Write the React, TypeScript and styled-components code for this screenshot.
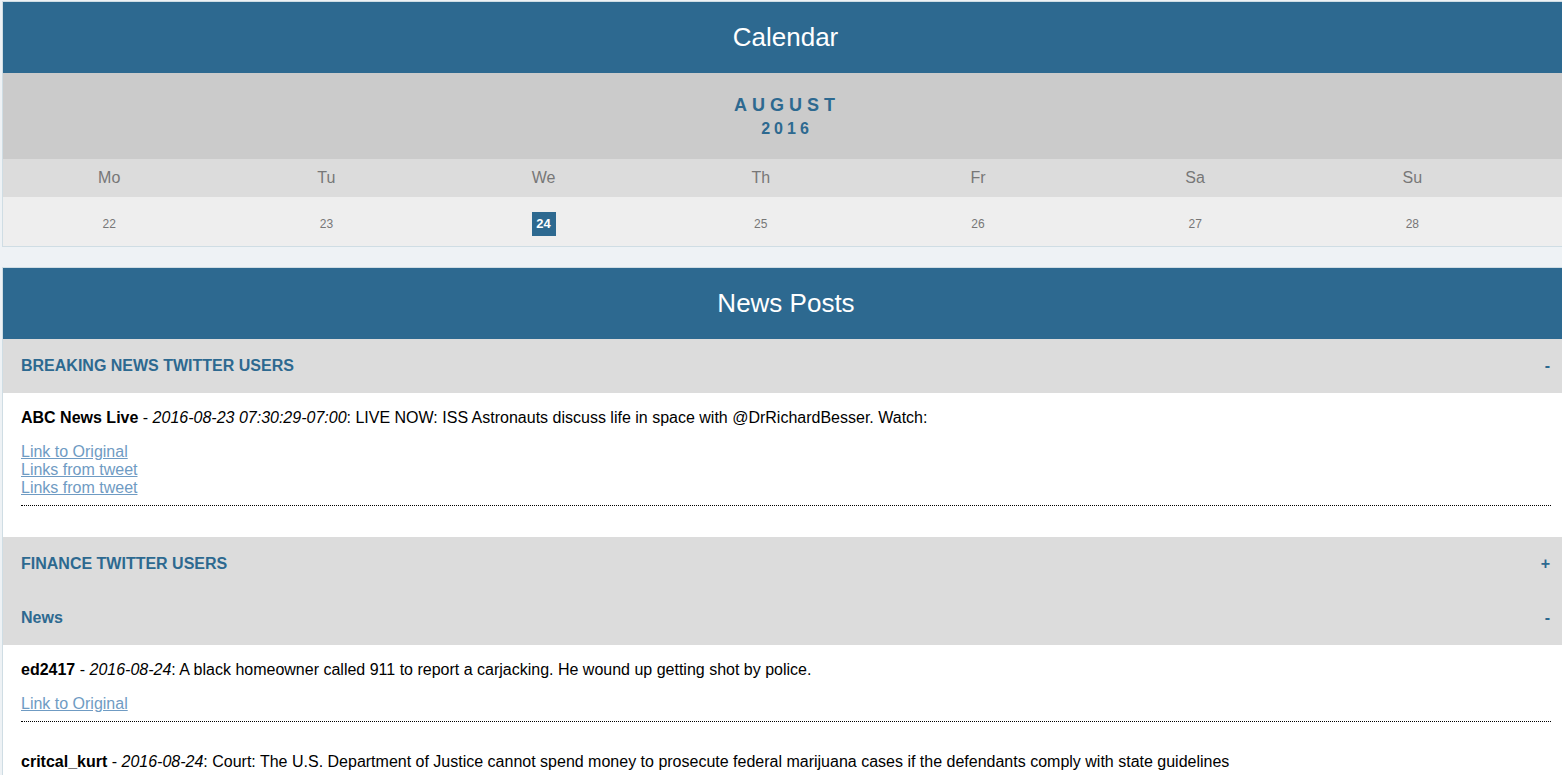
import React from "react";
import styled, { createGlobalStyle } from "styled-components";

const BLUE = "#2d6990";

const Global = createGlobalStyle`
  html, body {
    margin: 0;
    padding: 0;
    background: #eef2f5;
    overflow-x: hidden;
  }
  body {
    padding: 1px 0 0 2px;
    font-family: "Liberation Sans", Arial, sans-serif;
  }
`;

const Page = styled.div`
  width: 1567px;
  display: flex;
  flex-direction: column;
  gap: 20px;
`;

const Panel = styled.section`
  box-sizing: border-box;
  width: 100%;
  border: 1px solid #cfdde4;
  background: #ffffff;
`;

const PanelTitle = styled.h1`
  margin: 0;
  height: 71px;
  background: ${BLUE};
  color: #ffffff;
  font-size: 26px;
  font-weight: normal;
  display: flex;
  align-items: center;
  justify-content: center;
`;

const MonthBlock = styled.div`
  box-sizing: border-box;
  height: 86px;
  background: #cbcbcb;
  color: ${BLUE};
  font-weight: bold;
  display: flex;
  flex-direction: column;
  align-items: center;
  justify-content: center;
  padding: 2px 0 0 3px;
`;

const MonthName = styled.div`
  font-size: 18px;
  letter-spacing: 5px;
  line-height: 22px;
`;

const YearName = styled.div`
  font-size: 16px;
  letter-spacing: 4px;
  line-height: 22px;
  margin-top: 2px;
`;

const Row = styled.div<{ $bg: string; $h: number }>`
  background: ${(p) => p.$bg};
  height: ${(p) => p.$h}px;
  overflow: hidden;
`;

const Grid = styled.div`
  display: grid;
  grid-template-columns: repeat(7, 217.2px);
  margin-left: -2.4px;
  height: 100%;
  align-items: center;
  justify-items: center;
`;

const WeekDay = styled.div`
  color: #777777;
  font-size: 16px;
`;

const Day = styled.div<{ $active?: boolean }>`
  font-size: ${(p) => (p.$active ? "13px" : "12px")};
  font-weight: ${(p) => (p.$active ? "bold" : "normal")};
  color: ${(p) => (p.$active ? "#ffffff" : "#777777")};
  background: ${(p) => (p.$active ? BLUE : "transparent")};
  width: 24px;
  height: 24px;
  display: flex;
  align-items: center;
  justify-content: center;
  margin-top: 4px;
`;

const NewsPanel = styled(Panel)`
  border-right: none;
  border-bottom: none;
`;

const SectionHeader = styled.div`
  height: 54px;
  background: #dcdcdc;
  color: ${BLUE};
  font-weight: bold;
  font-size: 16px;
  display: flex;
  align-items: center;
  justify-content: space-between;
  padding: 0 19px 0 18px;
`;

const Toggle = styled.span`
  font-size: 16px;
  font-weight: bold;
`;

const SectionBody = styled.div`
  padding: 16px 18px 0 18px;
  background: #ffffff;
`;

const Post = styled.article`
  display: flex;
  flex-direction: column;
  margin-bottom: 31px;
`;

const PostText = styled.p`
  margin: 0 0 16px 0;
  font-size: 16px;
  line-height: 18px;
  color: #000000;
`;

const Author = styled.b`
  font-weight: bold;
`;

const Stamp = styled.i`
  font-style: italic;
`;

const Links = styled.div`
  display: flex;
  flex-direction: column;
  align-items: flex-start;
`;

const PostLink = styled.a`
  font-size: 16px;
  line-height: 18px;
  color: #6f9bc3;
  text-decoration: underline;
`;

const Divider = styled.hr`
  margin: 8px 0 0 0;
  border: none;
  border-top: 1px dotted #000000;
  height: 0;
`;

const days = ["Mo", "Tu", "We", "Th", "Fr", "Sa", "Su"];
const dates = [22, 23, 24, 25, 26, 27, 28];

type PostData = { author: string; stamp: string; text: string; links: string[] };

const breaking: PostData[] = [
  {
    author: "ABC News Live",
    stamp: "2016-08-23 07:30:29-07:00",
    text: "LIVE NOW: ISS Astronauts discuss life in space with @DrRichardBesser. Watch:",
    links: ["Link to Original", "Links from tweet", "Links from tweet"],
  },
];

const finance: PostData[] = [
  {
    author: "ed2417",
    stamp: "2016-08-24",
    text: "A black homeowner called 911 to report a carjacking. He wound up getting shot by police.",
    links: ["Link to Original"],
  },
  {
    author: "critcal_kurt",
    stamp: "2016-08-24",
    text: "Court: The U.S. Department of Justice cannot spend money to prosecute federal marijuana cases if the defendants comply with state guidelines",
    links: ["Link to Original"],
  },
];

const PostItem = ({ p }: { p: PostData }) => (
  <Post>
    <PostText>
      <Author>{p.author}</Author> - <Stamp>{p.stamp}</Stamp>: {p.text}
    </PostText>
    <Links>
      {p.links.map((l, i) => (
        <PostLink key={i} href="#">
          {l}
        </PostLink>
      ))}
    </Links>
    <Divider />
  </Post>
);

export default function App() {
  return (
    <>
      <Global />
      <Page>
        <Panel>
          <PanelTitle>Calendar</PanelTitle>
          <MonthBlock>
            <MonthName>AUGUST</MonthName>
            <YearName>2016</YearName>
          </MonthBlock>
          <Row $bg="#dcdcdc" $h={38}>
            <Grid>
              {days.map((d) => (
                <WeekDay key={d}>{d}</WeekDay>
              ))}
            </Grid>
          </Row>
          <Row $bg="#eeeeee" $h={49}>
            <Grid>
              {dates.map((d) => (
                <Day key={d} $active={d === 24}>
                  {d}
                </Day>
              ))}
            </Grid>
          </Row>
        </Panel>
        <NewsPanel>
          <PanelTitle>News Posts</PanelTitle>
          <SectionHeader>
            <span>BREAKING NEWS TWITTER USERS</span>
            <Toggle>-</Toggle>
          </SectionHeader>
          <SectionBody>
            {breaking.map((p, i) => (
              <PostItem key={i} p={p} />
            ))}
          </SectionBody>
          <SectionHeader>
            <span>FINANCE TWITTER USERS</span>
            <Toggle>+</Toggle>
          </SectionHeader>
          <SectionHeader>
            <span>News</span>
            <Toggle>-</Toggle>
          </SectionHeader>
          <SectionBody>
            {finance.map((p, i) => (
              <PostItem key={i} p={p} />
            ))}
          </SectionBody>
        </NewsPanel>
      </Page>
    </>
  );
}
